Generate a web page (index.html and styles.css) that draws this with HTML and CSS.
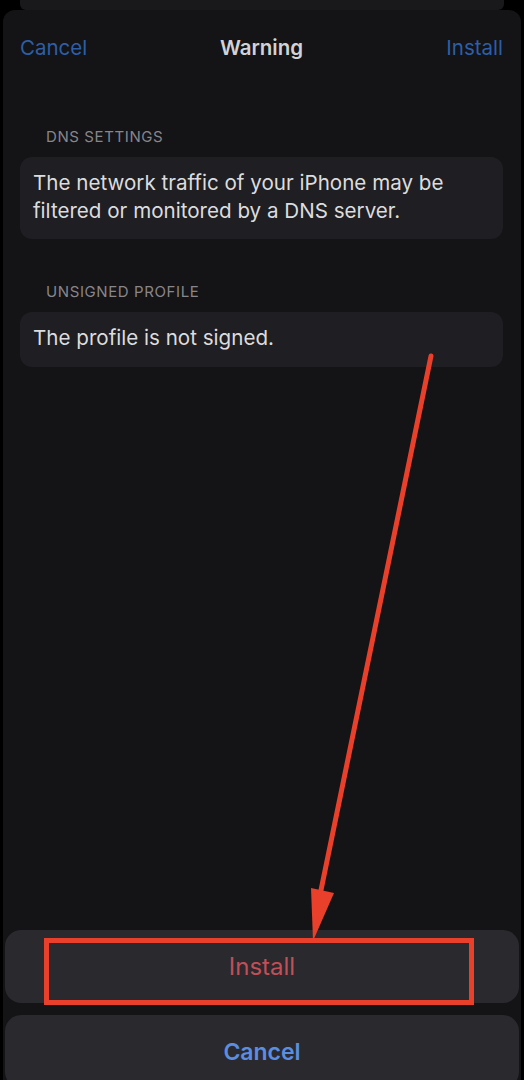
FILE: index.html
```html
<!DOCTYPE html>
<html lang="en">
<head>
    <meta charset="UTF-8">
    <meta name="viewport" content="width=device-width, initial-scale=1.0">
    <title>Warning</title>
    <link rel="stylesheet" href="styles.css">
</head>
<body>
    <div class="sheet-behind"></div>

    <div class="sheet">
        <nav class="nav-bar">
            <a class="nav-link" href="#">Cancel</a>
            <span class="nav-title">Warning</span>
            <a class="nav-link nav-right" href="#">Install</a>
        </nav>

        <section class="group">
            <p class="group-label">DNS SETTINGS</p>
            <div class="group-card">The network traffic of your iPhone may be filtered or monitored by a DNS server.</div>
        </section>

        <section class="group">
            <p class="group-label">UNSIGNED PROFILE</p>
            <div class="group-card">The profile is not signed.</div>
        </section>

        <div class="action-sheet">
            <button class="action-button action-install">
                Install
                <span class="highlight-box"></span>
            </button>
            <button class="action-button action-cancel">Cancel</button>
        </div>
    </div>

    <!-- annotation arrow -->
    <svg class="arrow" width="524" height="1080" viewBox="0 0 524 1080">
        <line x1="431" y1="356" x2="320" y2="895" stroke="#e8402a" stroke-width="5" stroke-linecap="round"/>
        <polygon points="313,941 311,888 334,893" fill="#e8402a"/>
    </svg>
</body>
</html>
```

FILE: styles.css
```css
body {
    margin: 0;
    padding: 0;
    width: 524px;
    height: 1080px;
    overflow: hidden;
    background-color: #000;
    font-family: Inter, "Liberation Sans", sans-serif;
    position: relative;
}

.sheet-behind {
    height: 10px;
    margin: 0 20px;
    background-color: #19181b;
    border-radius: 0 0 6px 6px;
}

.sheet {
    height: 1070px;
    margin: 0 3px;
    background-color: #141316;
    border-radius: 12px 12px 0 0;
    display: flex;
    flex-direction: column;
    overflow: hidden;
}

.nav-bar {
    height: 74px;
    padding: 0 18px 0 17px;
    display: grid;
    grid-template-columns: 1fr auto 1fr;
    align-items: center;
    flex-shrink: 0;
}

.nav-link {
    color: #2d5fa6;
    text-decoration: none;
    font-size: 20.5px;
}

.nav-right {
    justify-self: end;
}

.nav-title {
    color: #d2d2d4;
    font-size: 20.5px;
    font-weight: 600;
}

.group {
    margin: 0 18px 0 17px;
}

.group:first-of-type {
    margin-top: 43px;
}

.group + .group {
    margin-top: 43px;
}

.group-label {
    margin: 0 0 10px 26px;
    font-size: 15px;
    line-height: 20px;
    color: #87868b;
    letter-spacing: 0.6px;
}

.group-card {
    background-color: #1f1e22;
    border-radius: 12px;
    padding: 12px 13px 14px;
    font-size: 20.6px;
    line-height: 28px;
    color: #dcdcde;
}

.group + .group .group-card {
    padding-bottom: 15px;
}

.action-sheet {
    margin-top: auto;
    margin-bottom: -8px;
    padding: 0 2px;
    display: flex;
    flex-direction: column;
    gap: 12px;
}

.action-button {
    height: 73px;
    border: none;
    border-radius: 16px;
    background-color: #2a292d;
    font-family: inherit;
    font-size: 24px;
    position: relative;
    cursor: pointer;
}

.action-install {
    color: #c24f57;
}

.action-cancel {
    color: #5b8ee0;
    font-weight: 600;
    font-size: 23px;
}

.highlight-box {
    position: absolute;
    left: 39px;
    top: 8px;
    width: 430px;
    height: 67px;
    box-sizing: border-box;
    border: 5px solid #e8402a;
}

.arrow {
    position: absolute;
    top: 0;
    left: 0;
    pointer-events: none;
}
```
